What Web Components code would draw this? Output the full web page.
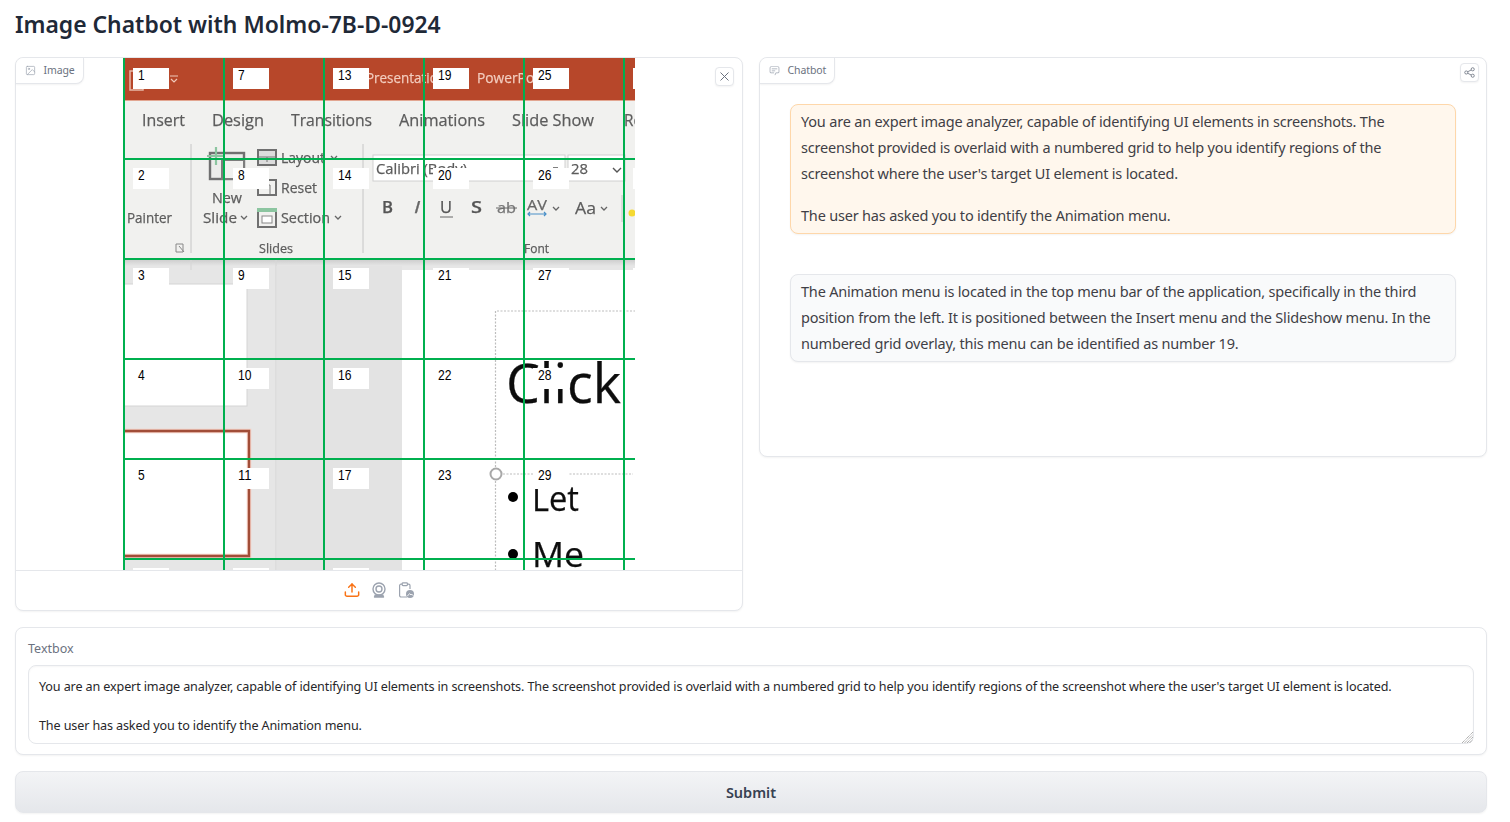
<!DOCTYPE html>
<html lang="en"><head><meta charset="utf-8"><title>Image Chatbot</title>
<style>
html,body{margin:0;background:#fff;}
body{font-family:"Noto Sans","Liberation Sans",sans-serif;color:#27272a;}
</style></head>
<body>
<chat-app>
  <page-title>Image Chatbot with Molmo-7B-D-0924</page-title>
  <app-row>
    <image-block></image-block>
    <chat-block>
      <chat-msg kind="user"><p>You are an expert image analyzer, capable of identifying UI elements in screenshots. The screenshot provided is overlaid with a numbered grid to help you identify regions of the screenshot where the user's target UI element is located.</p><p>The user has asked you to identify the Animation menu.</p></chat-msg>
      <chat-msg kind="bot"><p>The Animation menu is located in the top menu bar of the application, specifically in the third position from the left. It is positioned between the Insert menu and the Slideshow menu. In the numbered grid overlay, this menu can be identified as number 19.</p></chat-msg>
    </chat-block>
  </app-row>
  <text-block label="Textbox"></text-block>
  <submit-button>Submit</submit-button>
</chat-app>
<script>
const def=(name,html,init)=>customElements.define(name,class extends HTMLElement{
  connectedCallback(){ if(this.shadowRoot) return; const r=this.attachShadow({mode:'open'}); r.innerHTML=html; if(init) init(r,this);} });

def('chat-app',`<style>:host{display:flex;flex-direction:column;gap:16px;padding:0 23px 0 15px;box-sizing:border-box;width:1510px;height:822px;overflow:hidden}</style><slot></slot>`);
def('page-title',`<style>:host{display:block;height:25px;margin:12px 0 4px;font-size:22.900px;line-height:25px;font-weight:600;color:#1f2937}</style><slot></slot>`);
def('app-row',`<style>:host{display:flex;gap:16px;align-items:flex-start;height:554px}</style><slot></slot>`);

const tab=(icon,text)=>`<div class="tab">${icon}<span>${text}</span></div>`;
const tabCss=`.tab{position:absolute;left:0;top:0;display:flex;align-items:center;gap:8px;height:24px;padding:0 8px 1px 8.500px;background:#fff;border-right:1px solid #e5e7eb;border-bottom:1px solid #e5e7eb;border-bottom-right-radius:8px;border-top-left-radius:8px;font-size:10.500px;letter-spacing:-.1px;color:#6b7280;box-shadow:0 1px 2px rgba(0,0,0,.05);z-index:2}
.tab svg{width:11px;height:11px;flex:none;color:#9ca3af}
.ib{position:absolute;width:17px;height:17px;display:flex;align-items:center;justify-content:center;background:#fff;border:1px solid #e5e7eb;border-radius:4px;box-shadow:0 1px 2px rgba(0,0,0,.05);color:#6b7280;z-index:2}`;

def('image-block',`<style>:host{display:block;position:relative;flex:none;width:726px;height:552px;border:1px solid #e5e7eb;border-radius:8px;box-shadow:0 1px 2px rgba(0,0,0,.05);background:#fff}
${tabCss}
.view{display:flex;height:512px;padding-left:107px;overflow:hidden;border-top-left-radius:8px;border-top-right-radius:8px}
.bar{display:flex;justify-content:center;align-items:center;gap:11px;height:37px;padding-bottom:2px;border-top:1px solid #e5e7eb}
.bar svg{display:block}
</style>
${tab(`<svg viewBox="0 0 24 24" fill="none" stroke="currentColor" stroke-width="1.5" stroke-linecap="round" stroke-linejoin="round"><rect x="3" y="3" width="18" height="18" rx="2"/><circle cx="8.5" cy="8.5" r="1.5"/><polyline points="21 15 16 10 5 21"/></svg>`,'Image')}
<div class="ib" style="right:8px;top:9px"><svg width="11" height="11" viewBox="0 0 11 11" fill="none" stroke="currentColor" stroke-width="1"><path d="M1.5 1.5l8 8M9.5 1.5l-8 8"/></svg></div>
<div class="view"><ppt-grid></ppt-grid></div>
<div class="bar">
<svg width="16" height="16" viewBox="0 0 24 24" fill="none" stroke="#f97316" stroke-width="2.200" stroke-linecap="round" stroke-linejoin="round"><path d="M22 15v4a2.500 2.500 0 0 1-2.500 2.500h-15A2.500 2.500 0 0 1 2 19v-4"/><polyline points="17 8 12 3 7 8"/><line x1="12" y1="3" x2="12" y2="15"/></svg>
<svg width="16" height="16" viewBox="0 0 16 16" fill="none" stroke="#9ca3af" stroke-width="1.400"><circle cx="8" cy="7" r="6"/><circle cx="8" cy="7" r="3"/><path d="M4.500 12.500 3.500 15h9l-1-2.500" fill="#9ca3af" stroke-linejoin="round"/></svg>
<svg width="16" height="16" viewBox="0 0 16 16" fill="none" stroke="#9ca3af" stroke-width="1.200"><path d="M9 15H3a1.400 1.400 0 0 1-1.400-1.400V3.600A1.400 1.400 0 0 1 3 2.200h7.600A1.400 1.400 0 0 1 12 3.600V7"/><rect x="4.200" y=".8" width="5.200" height="2.800" rx=".8" fill="#fff"/><circle cx="12" cy="12" r="4" fill="#9ca3af" stroke="none"/><path d="M9.300 14.200 11.600 11.600l1.400 1.400 .9-.8 1.400 1.600" stroke="#fff" stroke-width=".9"/></svg>
</div>`);

/* The picture content: a PowerPoint screenshot with a numbered grid over it */
def('ppt-grid',`<style>:host{display:block;width:512px;height:512px;flex:none}svg{display:block}text{font-family:"Open Sans","Noto Sans",sans-serif}.soft text{stroke:currentColor;stroke-width:.25}</style><svg id="s" width="512" height="512" viewBox="123 58 512 512" xmlns="http://www.w3.org/2000/svg"><defs><filter id="b" x="-2%" y="-2%" width="104%" height="104%"><feGaussianBlur stdDeviation=".5"/></filter><linearGradient id="sh" x1="0" y1="0" x2="0" y2="1"><stop offset="0" stop-color="#cfcfcf"/><stop offset="1" stop-color="#e6e6e6"/></linearGradient></defs></svg>`,(r)=>{
  const T=(x,y,s,t,len,c='#5c5c5c',extra='')=>`<text x="${x}" y="${y}" font-size="${s}" fill="${c}" color="${c}" ${len?`textLength="${len}" lengthAdjust="spacingAndGlyphs"`:''} ${extra}>${t}</text>`;
  let g=`<g class="soft" filter="url(#b)">
  <rect x="124" y="58" width="511" height="43" fill="#b7472a"/>
  <rect x="124" y="100" width="511" height="1.500" fill="#e2a691"/>
  <rect x="124" y="101" width="511" height="159" fill="#f1f1ef"/>
  <rect x="124" y="260" width="511" height="310" fill="#e6e6e6"/>
  <rect x="124" y="260" width="511" height="6" fill="url(#sh)"/>
  <path d="M130 71h13v19h-13z" fill="none" stroke="#e8b9a8" stroke-width="1.500"/>
  <path d="M170 76h8M171 79l3 3 3-3" fill="none" stroke="#f0c9ba" stroke-width="1.200"/>
  ${T(366,83,15,'Presentation',80,'#f3cdbf')}
  ${T(477,83,15,'PowerPoint',74,'#f3cdbf')}
  ${T(142,126,17,'Insert',43)}${T(212,126,17,'Design',52)}${T(291,126,17,'Transitions',81)}${T(399,126,17,'Animations',86)}${T(512,126,17,'Slide Show',82)}${T(624,126,17,'Re',18)}
  <path d="M191 144v109M363 144v109M622 195v27" stroke="#c6c6c6" stroke-width="1"/>
  ${T(127,223,14,'Painter',45)}
  <path d="M176 244h7v8h-7zM179 246l5 6" fill="none" stroke="#888" stroke-width="1"/>
  <rect x="210" y="153" width="34" height="26" fill="#ececea" stroke="#6f6f6f" stroke-width="2.400"/>
  <rect x="222" y="160" width="22" height="19" fill="#f1f1ef" stroke="#7d7d7d" stroke-width="2"/>
  <path d="M216 147v18M207 156h18" stroke="#8cc5a0" stroke-width="2.200"/>
  ${T(212,203,14.500,'New',30)}${T(203,223,14.500,'Slide',34)}
  <path d="M241 216l3 3 3-3M335 216l3 3 3-3M331 156l3 3 3-3" fill="none" stroke="#666" stroke-width="1.300"/>
  <rect x="258" y="150" width="18" height="15" fill="#dcdcdc" stroke="#6f6f6f" stroke-width="2"/><path d="M258 157h18M267 157v5" stroke="#777"/>
  <rect x="258" y="180" width="18" height="15" fill="#f1f1ef" stroke="#6f6f6f" stroke-width="2"/><path d="M258 185h12v10" fill="none" stroke="#777"/>
  <rect x="258" y="209" width="18" height="18" fill="#f1f1ef" stroke="#6f6f6f" stroke-width="2"/><rect x="257" y="208" width="20" height="4" fill="#8cc5a0"/><rect x="262" y="216" width="10" height="7" fill="#fff" stroke="#888"/>
  ${T(281,163,14.500,'Layout',44)}${T(281,193,14.500,'Reset',36)}${T(281,223,14.500,'Section',49)}
  ${T(259,253,13,'Slides',34)}
  <rect x="373" y="155" width="192" height="26" fill="#fff" stroke="#d0d0d0"/>
  <rect x="568" y="155" width="57" height="26" fill="#fff" stroke="#d0d0d0"/>
  ${T(376,174,15,'Calibri (Body)',91)}${T(571,174,15,'28',17)}
  <path d="M553 168h5M613 168l4 4 4-4" fill="none" stroke="#555" stroke-width="1.400"/>
  ${T(382,213,16,'B',11,'#555','font-weight="600"')}${T(414,213,16,'I',6,'#666','font-style="italic"')}${T(440,213,16,'U',12,'#555')}<path d="M440 217h13" stroke="#666"/>
  ${T(471,213,17,'S',11,'#555','font-weight="600"')}${T(497,213,15,'ab',19,'#777')}<path d="M496 208h21" stroke="#666"/>
  ${T(527,210,15,'AV',20,'#666')}<path d="M528 214h18M530 212l-2 2 2 2M544 212l2 2-2 2" fill="none" stroke="#4a90c8" stroke-width="1.200"/>
  <path d="M553 207l3 3 3-3M601 207l3 3 3-3" fill="none" stroke="#666" stroke-width="1.300"/>
  ${T(575,214,17,'Aa',21)}
  <circle cx="632" cy="213" r="3.500" fill="#f5d932"/>
  ${T(524,253,13,'Font',25)}
  <path d="M191 260v10M276 260v310" stroke="#d8d8d8" stroke-width="1.200"/>
  <rect x="124" y="284" width="123" height="122" fill="#fff" stroke="#d4d4d4"/>
  <rect x="276.500" y="266" width="125.500" height="304" fill="#e3e3e3"/>
  <rect x="402" y="270" width="233" height="300" fill="#fff"/>
  <path d="M124 431h125v125H124" fill="#fff" stroke="#f5cfc3" stroke-width="4.500"/>
  <path d="M124 431h125v125H124" fill="none" stroke="#a14d38" stroke-width="2.400"/>
  <path d="M495.500 474V311H635" fill="none" stroke="#bdbdbd" stroke-width="1.200" stroke-dasharray="2 1.500"/>
  <path d="M495.500 474v96M503 474h132" fill="none" stroke="#bdbdbd" stroke-width="1.200" stroke-dasharray="2 1.500"/>
  <circle cx="496" cy="474" r="5.500" fill="#fff" stroke="#a8a8a8" stroke-width="2"/>
  ${T(506,403,55,'Click',115,'#111')}
  <circle cx="513" cy="497" r="5" fill="#000"/><circle cx="513" cy="554" r="5" fill="#000"/>
  ${T(532,511,34,'Let',47,'#111')}
  ${T(532,567,34,'Me',52,'#111')}
  </g>`;
  for(let c=0;c<6;c++)for(let i=0;i<6;i++){
    const X=133+c*100,Y=68+i*100,n=c*6+i+1;
    g+=`<rect x="${X}" y="${Y}" width="36" height="21" fill="#fff"/>`;
    g+=`<text x="${X+5}" y="${Y+12}" style="font-family:'Liberation Sans',sans-serif" font-size="14.500" fill="#000" textLength="${n>9?13.5:6.7}" lengthAdjust="spacingAndGlyphs">${n}</text>`;
  }
  for(let k=0;k<6;k++){
    g+=`<rect x="${123+k*100}" y="58" width="2" height="512" fill="#00b04f"/>`;
    g+=`<rect x="123" y="${158+k*100}" width="512" height="2" fill="#00b04f"/>`;
  }
  r.getElementById('s').insertAdjacentHTML('beforeend',g);
});

def('chat-block',`<style>:host{display:block;position:relative;flex:none;width:726px;height:398px;border:1px solid #e5e7eb;border-radius:8px;box-shadow:0 1px 2px rgba(0,0,0,.05);background:#fff}
${tabCss}
.log{display:flex;flex-direction:column;gap:40px;padding:46px 30px 0 30px}
</style>
${tab(`<svg viewBox="0 0 32 32" fill="currentColor"><path d="M17.740 30 16 29l4-7h6a2 2 0 0 0 2-2V8a2 2 0 0 0-2-2H6a2 2 0 0 0-2 2v12a2 2 0 0 0 2 2h9v2H6a4 4 0 0 1-4-4V8a4 4 0 0 1 4-4h20a4 4 0 0 1 4 4v12a4 4 0 0 1-4 4h-4.840Z"/><path d="M8 10h16v2H8zm0 6h10v2H8z"/></svg>`,'Chatbot')}
<div class="ib" style="right:7px;top:5px"><svg width="11" height="11" viewBox="0 0 12 12" fill="none" stroke="currentColor" stroke-width=".9"><circle cx="2.500" cy="6" r="1.700"/><circle cx="9.500" cy="2.500" r="1.700"/><circle cx="9.500" cy="9.500" r="1.700"/><path d="M4 5.200 8 3.200M4 6.800l4 2"/></svg></div>
<div class="log"><slot></slot></div>`);
def('chat-msg',`<style>:host{display:block;border:1px solid #e5e7eb;border-radius:8px;padding:3px 10px 5px;background:#f9fafb;font-size:14.500px;letter-spacing:-.19px;line-height:26px;color:#3f3f46;box-shadow:0 1px 2px rgba(0,0,0,.05)}
:host([kind=user]){background:#fff7ed;border-color:#fed7aa}
::slotted(p){margin:0}
::slotted(p:not(:first-child)){margin-top:16px}</style><slot></slot>`);

def('text-block',`<style>:host{display:block;box-sizing:border-box;height:128px;border:1px solid #e5e7eb;border-radius:8px;padding:12px;box-shadow:0 1px 2px rgba(0,0,0,.05);background:#fff}
label{display:block;font-size:12.500px;line-height:16px;color:#6b7280;padding-top:1px;margin:0 0 8px}
.wrap{position:relative}
.wrap svg{position:absolute;right:1px;bottom:1px;display:block}
textarea{display:block;box-sizing:border-box;width:100%;height:79px;margin:0;padding:11px 10px 9px;border:1px solid #e5e7eb;border-radius:8px;font:12.600px/19.500px "Noto Sans",sans-serif;letter-spacing:-.13px;color:#27272a;background:#fff;outline:none;resize:none;overflow:hidden;box-shadow:inset 0 1px 2px rgba(0,0,0,.04)}
</style><label for="t">Textbox</label><div class="wrap"><textarea id="t">You are an expert image analyzer, capable of identifying UI elements in screenshots. The screenshot provided is overlaid with a numbered grid to help you identify regions of the screenshot where the user's target UI element is located.

The user has asked you to identify the Animation menu.</textarea><svg width="11" height="11" viewBox="0 0 11 11" stroke="#8f8f8f" stroke-width="1" stroke-dasharray="1 .8"><path d="M0 11 11 0M2.500 11 11 2.500M5 11l6-6M7.500 11 11 7.500"/></svg></div>`);

def('submit-button',`<style>:host{display:block}button{display:block;width:100%;height:42px;border:1px solid #e5e7eb;border-radius:8px;background:linear-gradient(to bottom,#f3f4f6,#e5e7eb);font:600 14.500px "Noto Sans",sans-serif;color:#374151;box-shadow:0 1px 2px rgba(0,0,0,.05);padding:0}</style><button><slot></slot></button>`);
</script>
</body></html>
